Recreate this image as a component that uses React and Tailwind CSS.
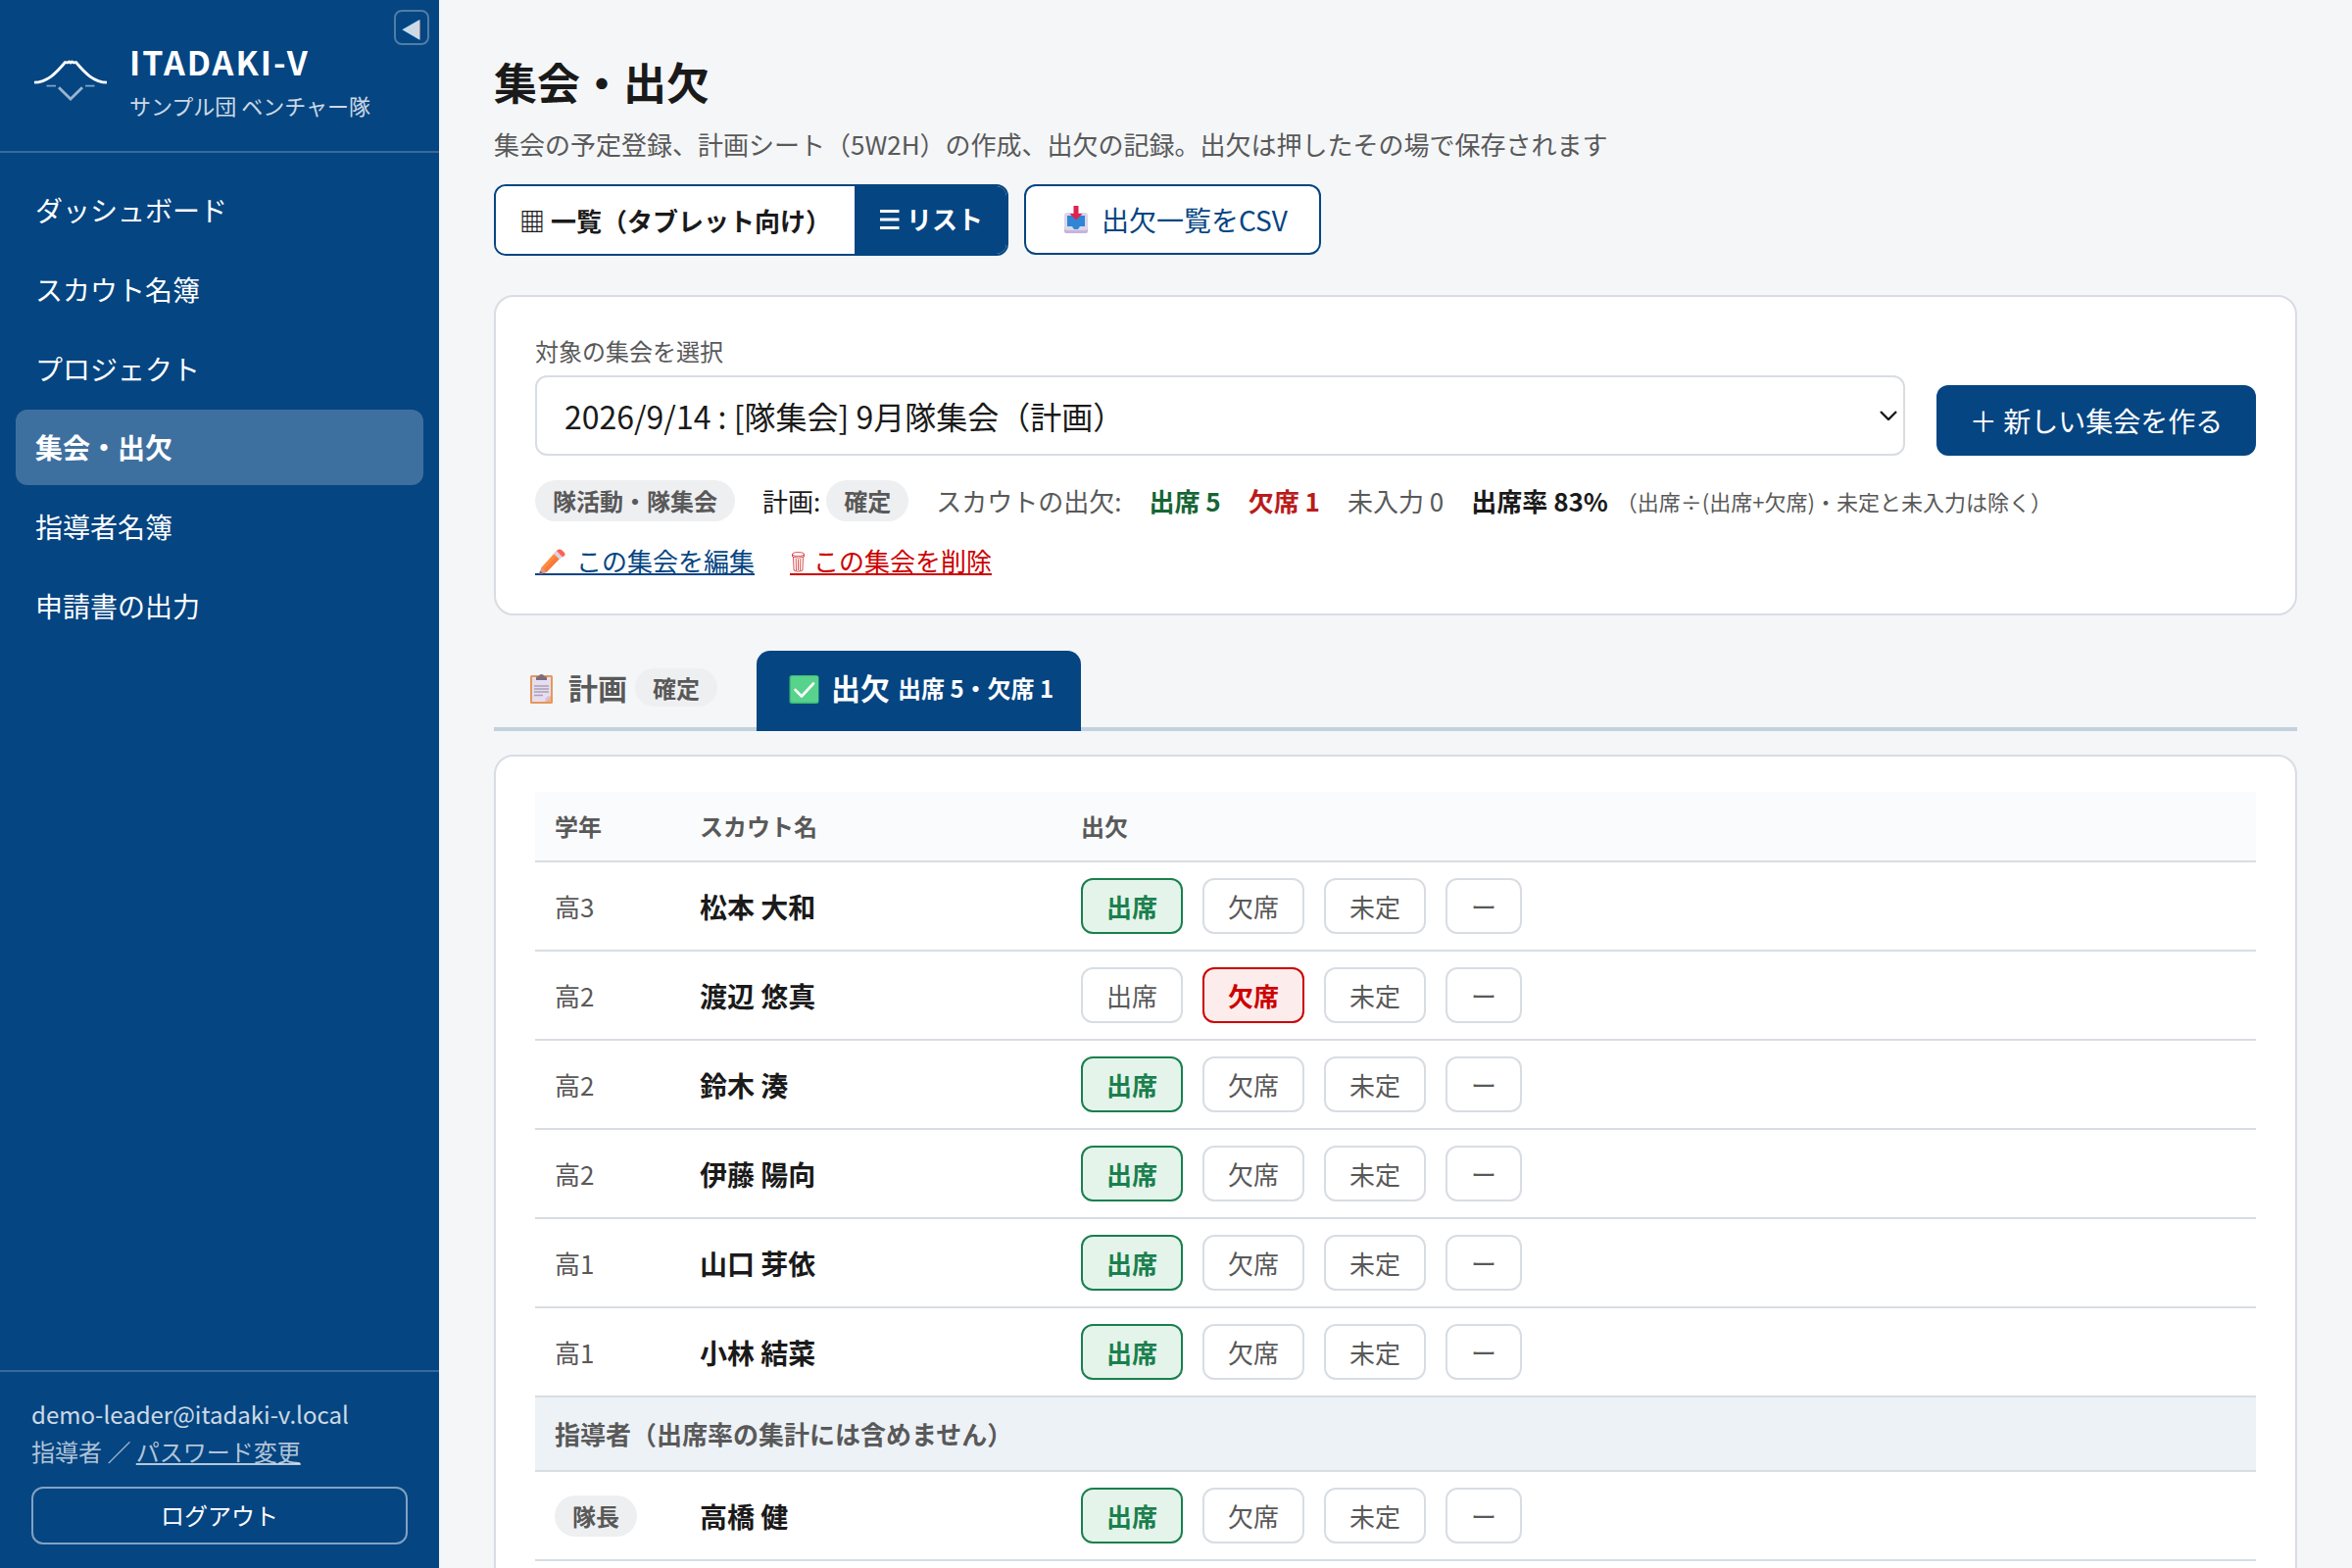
import React, { useState } from "react";

const navItems = [
  "ダッシュボード",
  "スカウト名簿",
  "プロジェクト",
  "集会・出欠",
  "指導者名簿",
  "申請書の出力",
];

const scouts = [
  { grade: "高3", name: "松本 大和", status: "出席" },
  { grade: "高2", name: "渡辺 悠真", status: "欠席" },
  { grade: "高2", name: "鈴木 湊", status: "出席" },
  { grade: "高2", name: "伊藤 陽向", status: "出席" },
  { grade: "高1", name: "山口 芽依", status: "出席" },
  { grade: "高1", name: "小林 結菜", status: "出席" },
];

const leaders = [{ role: "隊長", name: "高橋 健", status: "出席" }];

const options = ["出席", "欠席", "未定", "ー"];

const activeStyles = {
  出席: "border-[#1a7f4e] bg-[#e4f4ea] text-[#1a7f4e] font-bold",
  欠席: "border-[#cc0000] bg-[#fdecec] text-[#cc0000] font-bold",
  未定: "border-[#054582] bg-[#edf2f7] text-[#054582] font-bold",
  ー: "border-[#d8dde3] bg-white text-[#595959]",
};

const Logo = () => (
  <svg className="h-[44px] w-[76px] shrink-0" viewBox="0 0 76 44" fill="none">
    <path
      d="M1 24.200C14 23.800 23 15 32.500 3.500L34.500 4L36.500 3L38 4L39.500 3L41.500 4L43.500 3.500C53 15 62 23.800 75 24.200"
      stroke="#fff"
      strokeWidth="2.800"
      strokeLinejoin="round"
    />
    <path
      d="M13.500 27.700H23M53 27.700H62.500"
      stroke="#fff"
      strokeOpacity="0.5"
      strokeWidth="1.700"
    />
    <path
      d="M26 29.300L38 41L50 29.300"
      stroke="#fff"
      strokeOpacity="0.6"
      strokeWidth="2.800"
    />
  </svg>
);

const ListIcon = () => (
  <svg className="h-[22px] w-[29px]" viewBox="0 0 29 22" fill="none">
    <path d="M2 3.500H21.500M2 12H21.500M2 20.500H21.500" stroke="#fff" strokeWidth="2.800" />
  </svg>
);

const InboxIcon = () => (
  <svg className="h-[30px] w-[45px]" viewBox="0 0 45 30">
    <rect x="7" y="20" width="24" height="9" rx="2" fill="#c6b3dd" />
    <rect x="7" y="8" width="24" height="18" rx="3" fill="#ddd6e8" />
    <path d="M10 11H28V22H23L21 25H17L15 22H10Z" fill="#2f86d6" />
    <path d="M16.500 1H21.500V9H25.500L19 15.500L12.500 9H16.500Z" fill="#dc2450" />
  </svg>
);

const PencilIcon = () => (
  <svg className="mt-[9px] h-[30px] w-[42px]" viewBox="0 0 42 30">
    <path d="M22 3L27.500 8.500L11.500 25L5 27L6.500 20Z" fill="#ff8a3d" />
    <path d="M24.500 5.500L27.500 8.500L11.500 25L9 22.500Z" fill="#f57a3c" />
    <path d="M19 6L22 3L28 9L25 12Z" fill="#d9d3e6" />
    <path
      d="M22 3L23.500 1.800Q25.500 0.800 27.500 2.500L29.500 4.500Q31.500 6.500 30 8L28 9.500Z"
      fill="#fb6353"
    />
    <path d="M6.500 20L11.500 25L5.500 27Q4.200 27 4.500 25.500Z" fill="#d99a8c" />
    <path d="M5 23.500L8.300 26.300L5.500 27Q4.200 27 4.500 25.500Z" fill="#7d5a78" />
  </svg>
);

const TrashIcon = () => (
  <svg
    className="mt-[12px] h-[24px] w-[24px]"
    viewBox="0 0 24 24"
    fill="none"
    stroke="#cc0000"
    strokeOpacity="0.75"
    strokeWidth="0.900"
  >
    <ellipse cx="8.500" cy="3.500" rx="6" ry="2" />
    <path d="M2.500 3.500V6Q8.500 8.500 14.500 6V3.500M3.500 6.500L4.100 20Q8.500 22.500 12.900 20L13.500 6.500" />
    <path d="M6.200 8L6.500 20M8.500 8.500V20M10.800 8L10.500 20" />
  </svg>
);

const ClipboardIcon = () => (
  <svg className="h-[34px] w-[48px]" viewBox="0 0 48 34">
    <rect x="9" y="4" width="23" height="29" rx="1.500" fill="#e5975b" />
    <path d="M11 6H30V26L25 31H11Z" fill="#e6def0" />
    <path d="M30 25V31H24Q29 30 30 25Z" fill="#f3b48e" />
    <path d="M30 25L24 31Q24 25.500 30 25Z" fill="#cdbbe4" />
    <path d="M15 9V6.500Q15 5 18 5Q18 3 20.500 3Q23 3 23 5Q26 5 26 6.500V9Z" fill="#7b6c7c" />
    <path
      d="M13 15H28M13 18H28M13 21H28M13 24.500H22"
      stroke="#aaa0b4"
      strokeWidth="1.300"
    />
  </svg>
);

const CheckIcon = () => (
  <svg className="h-[34px] w-[48px]" viewBox="0 0 48 34">
    <rect x="5.500" y="4" width="30" height="29" rx="2.500" fill="#3fb877" />
    <rect x="7" y="5" width="28" height="26.500" rx="2" fill="#57d38c" />
    <path
      d="M11.500 19L18 25.500L30 12.500"
      fill="none"
      stroke="#fff"
      strokeWidth="2.600"
      strokeLinecap="round"
      strokeLinejoin="round"
    />
  </svg>
);

const Badge = ({ children }) => (
  <span className="inline-block rounded-full bg-[#eeeff1] px-[18px] text-[24px] leading-[42px] font-bold text-[#595959]">
    {children}
  </span>
);

const Sidebar = () => (
  <aside className="relative flex w-[448px] shrink-0 flex-col bg-[#054582] text-white">
    <button className="absolute top-[10px] right-[10px] flex size-[36px] items-center justify-center rounded-[8px] border-2 border-white/30 text-[22px] leading-none text-white/80">
      ◀
    </button>
    <div className="flex h-[156px] items-center gap-[22px] border-b-2 border-white/20 px-[34px] pt-[10px]">
      <Logo />
      <div className="flex flex-col">
        <span className="text-[34px] leading-[48px] font-bold tracking-[2px]">
          ITADAKI-V
        </span>
        <span className="mt-px text-[22px] leading-[38px] text-white/80">
          サンプル団 ベンチャー隊
        </span>
      </div>
    </div>
    <nav className="flex flex-1 flex-col gap-1 px-4 py-5">
      {navItems.map((item) => (
        <a
          key={item}
          className={
            item === "集会・出欠"
              ? "rounded-[12px] bg-white/23 px-5 py-4 text-[28px] leading-[44.8px] font-bold"
              : "rounded-[12px] px-5 py-4 text-[28px] leading-[44.8px]"
          }
        >
          {item}
        </a>
      ))}
    </nav>
    <div className="h-[202px] border-t-2 border-white/20 px-8 pt-6">
      <div className="text-[24px] leading-[38.4px] text-white/80">
        demo-leader@itadaki-v.local
      </div>
      <div className="text-[24px] leading-[38.4px] text-white/70">
        指導者 ／ <a className="underline">パスワード変更</a>
      </div>
      <button className="mt-4 h-[59px] w-full rounded-[12px] border-2 border-white/50 text-[24px]">
        ログアウト
      </button>
    </div>
  </aside>
);

const AttendanceButtons = ({ value, onChange }) => (
  <div className="flex gap-5">
    {options.map((o) => (
      <button
        key={o}
        onClick={() => onChange(o)}
        className={`h-[57px] rounded-[12px] border-2 px-6 text-[26px] leading-none ${
          o === value
            ? activeStyles[o]
            : "border-[#d8dde3] bg-white text-[#595959]"
        }`}
      >
        {o}
      </button>
    ))}
  </div>
);

const Row = ({ first, name, initial }) => {
  const [status, setStatus] = useState(initial);
  return (
    <div className="flex h-[91px] items-center border-b-2 border-[#d8dde3] px-5">
      <div className="w-[148px] text-[26px] text-[#595959]">{first}</div>
      <div className="w-[389px] text-[28px] font-bold">{name}</div>
      <AttendanceButtons value={status} onChange={setStatus} />
    </div>
  );
};

const App = () => (
  <div className="flex h-[1600px] w-[2400px] overflow-hidden bg-[#f4f6f8] font-['Noto_Sans_CJK_JP',sans-serif] text-[#1a1a1a]">
    <Sidebar />
    <main className="flex flex-1 flex-col px-14 pt-[50px]">
      <h1 className="text-[44px] leading-[67px] font-bold">集会・出欠</h1>
      <p className="mt-[8px] text-[26px] leading-[44px] text-[#595959]">
        集会の予定登録、計画シート（5W2H）の作成、出欠の記録。出欠は押したその場で保存されます
      </p>
      <div className="mt-[19px] flex items-start gap-4">
        <div className="flex h-[73px] overflow-hidden rounded-[12px] border-2 border-[#054582] text-[26px] font-bold">
          <button className="bg-white px-6">▦ 一覧（タブレット向け）</button>
          <button className="flex items-center bg-[#054582] px-6 pb-1 text-white">
            <ListIcon />
            リスト
          </button>
        </div>
        <button className="flex h-[72px] items-center rounded-[12px] border-2 border-[#054582] bg-white px-8 text-[28px] text-[#054582]">
          <InboxIcon />
          出欠一覧をCSV
        </button>
      </div>

      <section className="mt-10 h-[327px] shrink-0 rounded-[20px] border-2 border-[#d8dde3] bg-white px-10 pt-[35px]">
        <div className="flex items-end gap-8">
          <div className="flex-1">
            <label className="block text-[24px] leading-[40px] text-[#595959]">
              対象の集会を選択
            </label>
            <div className="mt-[5px] flex h-[82px] items-center justify-between rounded-[12px] border-2 border-[#d8dde3] pr-[6px] pl-7 text-[32px]">
              2026/9/14 : [隊集会] 9月隊集会（計画）
              <svg className="h-[10px] w-[18px]" viewBox="0 0 18 10" fill="none">
                <path d="M1 1L9 9L17 1" stroke="#1a1a1a" strokeWidth="2.400" />
              </svg>
            </div>
          </div>
          <button className="h-[72px] w-[326px] rounded-[12px] bg-[#054582] text-[28px] text-white">
            ＋ 新しい集会を作る
          </button>
        </div>
        <div className="mt-6 flex items-center text-[26px] leading-[44px]">
          <Badge>隊活動・隊集会</Badge>
          <span className="mr-[6px] ml-7">計画:</span>
          <Badge>確定</Badge>
          <span className="ml-7 text-[#595959]">スカウトの出欠:</span>
          <b className="ml-7 text-[#166534]">出席 5</b>
          <b className="ml-7 text-[#b91c1c]">欠席 1</b>
          <span className="ml-7 text-[#595959]">未入力 0</span>
          <b className="ml-7">出席率 83%</b>
          <span className="ml-[8px] text-[22px] text-[#595959]">
            （出席÷(出席+欠席)・未定と未入力は除く）
          </span>
        </div>
        <div className="mt-[17px] flex gap-9 text-[26px] leading-[44px]">
          <a className="flex h-[37px] items-start border-b-2 border-[#054582] text-[#054582]">
            <PencilIcon />
            この集会を編集
          </a>
          <a className="flex h-[37px] items-start border-b-2 border-[#cc0000] text-[#cc0000]">
            <TrashIcon />
            この集会を削除
          </a>
        </div>
      </section>

      <div className="mt-9 flex h-[82px] shrink-0 gap-3 border-b-4 border-[#c2d1e0] text-[30px] font-bold">
        <button className="flex items-center px-7 pb-[3px] text-[#595959]">
          <ClipboardIcon />
          計画
          <span className="ml-2 rounded-full bg-[#eeeff1] px-[18px] text-[24px] leading-[39px]">
            確定
          </span>
        </button>
        <button className="flex h-[82px] items-center rounded-t-[14px] bg-[#054582] px-7 pb-[7px] text-white">
          <CheckIcon />
          出欠
          <span className="ml-2 text-[24px]">出席 5・欠席 1</span>
        </button>
      </div>

      <section className="mt-6 h-[900px] shrink-0 rounded-[20px] border-2 border-[#d8dde3] bg-white px-10 pt-9">
        <div className="flex h-[72px] items-center border-b-2 border-[#d8dde3] bg-[#fafbfc] px-5 text-[24px] font-bold text-[#595959]">
          <div className="w-[148px]">学年</div>
          <div className="w-[389px]">スカウト名</div>
          <div>出欠</div>
        </div>
        {scouts.map((s) => (
          <Row key={s.name} first={s.grade} name={s.name} initial={s.status} />
        ))}
        <div className="flex h-[76px] items-center border-b-2 border-[#d8dde3] bg-[#edf2f7] px-5 pb-[2px] text-[26px] font-bold text-[#595959]">
          指導者（出席率の集計には含めません）
        </div>
        {leaders.map((l) => (
          <Row
            key={l.name}
            first={<Badge>{l.role}</Badge>}
            name={l.name}
            initial={l.status}
          />
        ))}
      </section>
    </main>
  </div>
);

export default App;
